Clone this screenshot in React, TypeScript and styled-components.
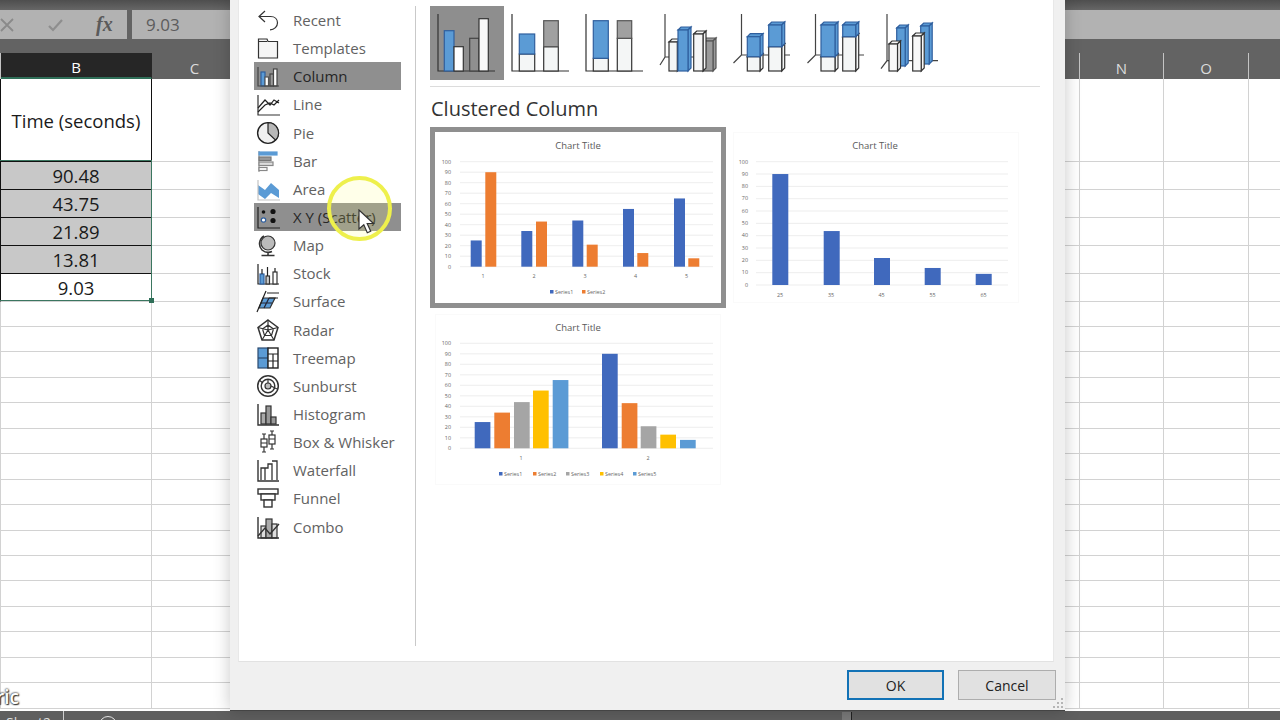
import React from 'react';
import styled, { createGlobalStyle } from 'styled-components';

const Global = createGlobalStyle`
  html, body { margin: 0; padding: 0; background: #fff; }
  #root { width: 1280px; height: 720px; overflow: hidden; }
  * { box-sizing: border-box; }
`;

const Page = styled.div`
  position: relative;
  width: 1280px;
  height: 720px;
  overflow: hidden;
  display: flex;
  flex-direction: column;
  font-family: "Open Sans", "Liberation Sans", sans-serif;
`;
const Main = styled.div`
  display: flex;
  height: 711px;
  flex: none;
`;
const Pane = styled.div<{ $w: number }>`
  width: ${p => p.$w}px;
  flex: none;
  display: flex;
  flex-direction: column;
  overflow: hidden;
`;
const TopBand = styled.div`
  height: 10px;
  flex: none;
  background: linear-gradient(#4e4e4e, #666);
`;
const FormulaBar = styled.div`
  height: 30px;
  flex: none;
  display: flex;
  gap: 5px;
  background: #636363;
  border-bottom: 1px solid #636363;
`;
const FormulaSlot = styled.div<{ $w?: number }>`
  ${p => (p.$w ? `width: ${p.$w}px; flex: none;` : 'flex: 1;')}
  background: #b2b2b2;
  color: #5c5c5c;
  display: flex;
  align-items: center;
  position: relative;
  font-size: 17px;
  padding-left: 14px;
`;
const FormulaIcons = styled.div`
  display: flex;
  align-items: center;
  gap: 31px;
  margin-left: -14px;
`;
const FxMark = styled.span`
  font-family: "Liberation Serif", serif;
  font-style: italic;
  font-weight: 700;
  font-size: 20px;
  color: #5a5a5a;
`;
const HeadGap = styled.div`
  height: 13px;
  flex: none;
  background: #636363;
`;
const HeadRow = styled.div`
  height: 26px;
  flex: none;
  display: flex;
  background: #636363;
`;
const HeadCell = styled.div<{ $w: number; $active?: boolean }>`
  width: ${p => p.$w}px;
  flex: none;
  display: flex;
  align-items: center;
  justify-content: center;
  padding-top: 3px;
  font-size: 15px;
  color: ${p => (p.$active ? '#fff' : '#dcdcdc')};
  background: ${p => (p.$active ? '#262626' : 'transparent')};
  border-right: 1px solid ${p => (p.$active ? '#262626' : '#c4c4c4')};
  border-bottom: ${p => (p.$active ? '2px solid #2f6f58' : '0')};
  &:last-child { border-right: 0; }
`;
const GridArea = styled.div`
  position: relative;
  flex: 1;
  background: #fff;
  overflow: hidden;
`;
const GridRow = styled.div<{ $h: number }>`
  display: flex;
  height: ${p => p.$h}px;
`;
type Tone = 'blank' | 'title' | 'picked' | 'value';
const Cell = styled.div<{ $w: number; $tone?: Tone }>`
  width: ${p => p.$w}px;
  flex: none;
  display: flex;
  align-items: center;
  justify-content: center;
  padding-top: 1px;
  font-size: 18.5px;
  color: #1a1a1a;
  background: ${p => (p.$tone === 'picked' ? '#c8c8c8' : '#fff')};
  border-right: ${p => (p.$tone && p.$tone !== 'blank' ? '1.5px solid #111' : '1px solid #d2d2d2')};
  border-bottom: ${p =>
    p.$tone === 'title' || p.$tone === 'picked' ? '1.5px solid #111' : '1px solid #d2d2d2'};
  &:last-child { border-right: 0; }
`;
const Selection = styled.div`
  position: absolute;
  left: -2px;
  top: 81px;
  width: 154px;
  height: 141px;
  border: 1.5px solid #3b7660;
  &::after {
    content: '';
    position: absolute;
    right: -3px;
    bottom: -3px;
    width: 5px;
    height: 5px;
    background: #2f6f58;
  }
`;
const Caption = styled.div`
  position: absolute;
  left: -4px;
  top: 684px;
  font-size: 19px;
  font-weight: 600;
  color: #fff;
  text-shadow: 0 0 2px #333, 0 0 2px #333, 1px 1px 1px #444;
`;

/* Dialog */
const Dialog = styled.div`
  position: relative;
  z-index: 2;
  width: 835px;
  flex: none;
  display: flex;
  flex-direction: column;
  background: #f0f0f0;
  box-shadow: 0 0 16px rgba(0, 0, 0, 0.22);
  border-bottom: 1px solid #444;
`;
const Body = styled.div`
  height: 662px;
  flex: none;
  margin: 0 11px 0 8px;
  background: #fff;
  display: flex;
  border-bottom: 1px solid #e2e2e2;
  border-right: 1px solid #e8e8e8;
  border-left: 1px solid #e8e8e8;
`;
const Nav = styled.div`
  width: 177px;
  flex: none;
  margin-top: 6px;
  height: 640px;
  padding-left: 15px;
  padding-right: 14px;
  border-right: 1px solid #c9c9c9;
`;
const NavRow = styled.div<{ $on?: boolean }>`
  height: 28.15px;
  display: flex;
  align-items: center;
  gap: 13px;
  padding-left: 2px;
  font-size: 15px;
  white-space: nowrap;
  color: ${p => (p.$on ? '#262626' : '#626262')};
  background: ${p => (p.$on ? '#8f8f8f' : 'transparent')};
`;
const NavSvg = styled.svg`
  width: 24px;
  height: 24px;
  flex: none;
  fill: none;
  stroke: #333;
  stroke-width: 1.2;
`;
const Side = styled.div`
  flex: 1;
  padding: 6px 0 0 14px;
  min-width: 0;
`;
const Strip = styled.div`
  width: 610px;
  height: 81px;
  display: flex;
  border-bottom: 1px solid #dcdcdc;
`;
const Tile = styled.div<{ $on?: boolean }>`
  width: 74px;
  height: 74px;
  flex: none;
  background: ${p => (p.$on ? '#8e8e8e' : 'transparent')};
`;
const TileSvg = styled.svg`
  width: 74px;
  height: 74px;
  display: block;
  fill: none;
  stroke: #333;
  stroke-width: 1.2;
`;
const Heading = styled.div`
  height: 40px;
  display: flex;
  align-items: center;
  padding: 2px 0 0 1px;
  font-size: 20px;
  color: #333;
`;
const Gallery = styled.div`
  display: grid;
  grid-template-columns: 296px 296px;
  column-gap: 2px;
  row-gap: 1px;
  align-content: start;
`;
const Card = styled.div<{ $on?: boolean }>`
  width: 296px;
  height: 181px;
  border: 5px solid ${p => (p.$on ? '#8f8f8f' : 'transparent')};
`;
const ChartSvg = styled.svg<{ $on?: boolean }>`
  display: block;
  width: 286px;
  height: 171px;
  outline: ${p => (p.$on ? '0' : '1px solid #fafafa')};
  outline-offset: -1px;
  font-family: "Open Sans", "Liberation Sans", sans-serif;
`;
const Footer = styled.div`
  flex: 1;
  display: flex;
  justify-content: flex-end;
  align-items: flex-start;
  gap: 14px;
  padding: 8px 9px 0 0;
`;
const Btn = styled.button<{ $primary?: boolean }>`
  width: ${p => (p.$primary ? 97 : 98)}px;
  height: 30px;
  padding: 0;
  font-family: inherit;
  font-size: 14px;
  color: #222;
  background: #e1e1e1;
  border: ${p => (p.$primary ? '2px solid #1272b6' : '1px solid #adadad')};
`;
const Grip = styled.svg`
  position: absolute;
  right: 1px;
  bottom: 1px;
  width: 12px;
  height: 12px;
  fill: #b5b5b5;
`;

/* Status bar */
const Status = styled.div`
  flex: 1;
  background: #5f5f5f;
  display: flex;
  align-items: flex-start;
  color: #dedede;
  font-size: 14px;
  line-height: 14px;
  position: relative;
  overflow: hidden;
`;
const SheetTab = styled.div`
  width: 64px;
  height: 100%;
  padding: 5px 0 0 6px;
  border-right: 1px solid #cfcfcf;
`;
const AddRing = styled.div`
  width: 18px;
  height: 18px;
  margin: 5px 0 0 35px;
  border: 1.5px solid #e4e4e4;
  border-radius: 50%;
`;
const Scroller = styled.div`
  margin: 1px 428px 0 auto;
  width: 10px;
  height: 8px;
  background: #7a7a7a;
  border-right: 1px solid #222;
`;

/* Pointer overlay */
const Halo = styled.div`
  position: absolute;
  z-index: 5;
  left: 327px;
  top: 176px;
  width: 65px;
  height: 65px;
  border-radius: 50%;
  border: 4px solid #eef04c;
  background: rgba(255, 255, 120, 0.16);
`;
const Pointer = styled.svg`
  position: absolute;
  z-index: 6;
  left: 358px;
  top: 209px;
  width: 18px;
  height: 26px;
`;

const rows = [82.5, 28, 28, 28, 28, 28, ...Array(16).fill(25.46)];

const Rec = ({ x, y, w, h, f, s }: { x: number; y: number; w: number; h: number; f: string; s?: string }) => (
  <rect x={x} y={y} width={w} height={h} fill={f} stroke={s ?? '#333'} />
);
const Blue = '#5b9bd5';
const BlueEdge = '#2f5f9e';

const icons: Record<string, React.ReactNode> = {
  Recent: <path d="M9 3 3 8.5l6 5.5M3 8.5h11.5c4.5 0 7 2.8 7 6.3S18.5 21.8 14 21.8" />,
  Templates: <path fill="#f6f6f6" d="M2.5 3H11l1 2.5h9.5V22h-19ZM2.5 5.5H11" />,
  Column: (
    <>
      <Rec x={5} y={8} w={4} h={14} f={Blue} s={BlueEdge} />
      <Rec x={9} y={13} w={3.5} h={9} f="#fff" s="#555" />
      <Rec x={14} y={10} w={3.5} h={12} f="#999" s="#444" />
      <Rec x={17.5} y={5} w={3.5} h={17} f="#fff" s="#444" />
      <path d="M2 3v19h21" stroke="#444" />
    </>
  ),
  Line: (
    <>
      <path d="M2 3v20h22" />
      <path d="M2 16l7-8 5 5 4-5 5 3M2 20l7-7 5-2 4 2 5-5" stroke="#222" />
    </>
  ),
  Pie: (
    <>
      <circle cx="12" cy="12" r="10.4" fill="#f0f0f0" stroke="#222" strokeWidth="1.4" />
      <path d="M12 12V1.6a10.4 10.4 0 0 1 7.6 17.6Z" fill="#b8b8b8" stroke="#222" />
    </>
  ),
  Bar: (
    <>
      <path d="M3 2v21" stroke="#999" />
      <Rec x={3} y={3} w={18} h={3} f={Blue} s={Blue} />
      <Rec x={3} y={8} w={12} h={3.5} f="#999" s="#777" />
      <Rec x={3} y={13} w={14} h={3.5} f="#ddd" s="#888" />
      <Rec x={3} y={18.5} w={8} h={3} f="#fff" s="#888" />
    </>
  ),
  Area: (
    <>
      <path d="M2 8l7 5 6-7 8 7v8l-8-5-6 6-7-5Z" fill={Blue} stroke="none" />
      <path d="M2 3v20h22" stroke="#c4c4c4" />
    </>
  ),
  'X Y (Scatter)': (
    <>
      <path d="M2 2v21h22" stroke="#222" />
      <circle cx="7.5" cy="7" r="1.8" fill="#111" stroke="none" />
      <circle cx="17" cy="6.5" r="2.6" fill="#111" stroke="none" />
      <circle cx="7.5" cy="15" r="2.2" fill="#fff" stroke={BlueEdge} />
      <circle cx="17" cy="15.5" r="2.6" fill="#111" stroke="none" />
    </>
  ),
  Map: (
    <>
      <circle cx="12" cy="10" r="7" fill="#bbb" />
      <path d="M8 3c-5 3-6 10-2 14 3 2.4 7 2.8 10 1.5M12 20v2M5.5 22.500h13" strokeWidth="1.6" />
    </>
  ),
  Stock: (
    <>
      <path d="M2 3v20h21" stroke="#222" />
      <Rec x={4} y={13} w={4} h={10} f={Blue} s={BlueEdge} />
      <Rec x={10} y={15} w={3.5} h={8} f="#ccc" s="#333" />
      <Rec x={17} y={11} w={4} h={12} f="#fff" s="#333" />
      <path d="M11.5 6v9M6 8v5M19 7v4" stroke="#222" />
    </>
  ),
  Surface: (
    <>
      <path d="M7 9h12l-5 10H3Z" fill={Blue} stroke="#333" />
      <path d="M13 9 8 19M5 14h11" stroke="#223" />
      <path d="M10 2 1 23M11 4h12M13 9h9" stroke="#222" />
    </>
  ),
  Radar: (
    <>
      <path d="M12 2l10 7.5-4 12.5H6L2 9.5Z" strokeWidth="1.5" />
      <path d="M12 7l5.5 4-2 6.5h-7l-2-6.5ZM12 2v10l10-2.5M12 12l6 10M12 12l-6 10M12 12 2 9.5" />
    </>
  ),
  Treemap: (
    <>
      <rect x="2" y="2" width="10" height="20" fill={Blue} stroke="#2a4a70" />
      <path d="M2 12h10" stroke="#2a4a70" />
      <rect x="12" y="2" width="10" height="20" fill="#fff" stroke="#222" strokeWidth="1.4" />
      <path d="M12 8h10M12 15h10M17 8v14" stroke="#222" />
    </>
  ),
  Sunburst: (
    <>
      <circle cx="12" cy="12" r="10.3" strokeWidth="1.5" />
      <circle cx="12" cy="12" r="6.8" strokeWidth="1.4" />
      <circle cx="12" cy="12" r="3" fill="#bbb" />
      <path d="M12 5v4M3 6l4 3M15 12l6 3" />
    </>
  ),
  Histogram: (
    <>
      <Rec x={5} y={11} w={5} h={11} f="#aaa" />
      <Rec x={10} y={4} w={5} h={18} f="#999" />
      <Rec x={15} y={15} w={5} h={7} f="#999" />
      <path d="M2 2v21h21" strokeWidth="1.4" />
    </>
  ),
  'Box & Whisker': (
    <>
      <path d="M8 4v5M8 17v5M16 1v4M16 14v5M6 4h4M6 22h4M14 1h4M14 19h4" />
      <rect x="5" y="9" width="6" height="8" fill="#fff" />
      <rect x="13" y="5" width="6" height="9" fill="#fff" />
      <path d="M5 13h6M13 9h6" />
    </>
  ),
  Waterfall: (
    <>
      <path d="M2 2v21h21" strokeWidth="1.4" />
      <path d="M5 22V10h4V22M9 10h3V6h4v16M16 3h5v19" strokeWidth="1.3" />
    </>
  ),
  Funnel: (
    <>
      <rect x="2" y="3" width="20" height="5" fill="#fff" strokeWidth="1.4" />
      <rect x="5" y="8" width="14" height="6" fill="#fff" strokeWidth="1.4" />
      <rect x="8" y="14" width="8" height="7" fill="#fff" strokeWidth="1.4" />
    </>
  ),
  Combo: (
    <>
      <Rec x={5} y={11} w={5} h={12} f="#ddd" />
      <Rec x={10} y={4} w={6} h={19} f="#aaa" />
      <Rec x={16} y={9} w={5} h={14} f="#ddd" />
      <path d="M2 2v21h21" strokeWidth="1.4" />
      <path d="M2 21l7-8 5 6 9-10" strokeWidth="1.4" />
    </>
  ),
};

const navNames = Object.keys(icons);

const Bar3D = ({ x, y, w, h, d = 3, f, s = '#333' }: { x: number; y: number; w: number; h: number; d?: number; f: string; s?: string }) => (
  <g stroke={s}>
    <path d={`M${x} ${y}l${d} ${-d}h${w}l${-d} ${d}Z`} fill={f} />
    <path d={`M${x + w} ${y}l${d} ${-d}v${h}l${-d} ${d}Z`} fill={f} />
    <rect x={x} y={y} width={w} height={h} fill={f} />
  </g>
);
const Axes2D = () => <path d="M8 8v57h57" stroke="#333" />;
const Axes3D = ({ x, y, dx = 8 }: { x: number; y: number; dx?: number }) => (
  <path d={`M${x} 8v${y - 8}l${-dx} 8M${x} ${y}H64`} stroke="#444" />
);

const tiles: React.ReactNode[] = [
  <>
    <Axes2D />
    <Rec x={14.3} y={24.7} w={9.7} h={40.3} f={Blue} s={BlueEdge} />
    <Rec x={24} y={40.7} w={9.3} h={24.3} f="#fff" />
    <Rec x={39.7} y={32.3} w={9.3} h={32.7} f="#8f8f8f" s="#444" />
    <Rec x={49} y={12.7} w={9.3} h={52.3} f="#f8f8f8" />
  </>,
  <>
    <Axes2D />
    <Rec x={15.3} y={48} w={15.4} h={17} f="#f4f6f6" />
    <Rec x={15.3} y={28} w={15.4} h={20} f={Blue} s={BlueEdge} />
    <Rec x={39.7} y={40.7} w={14.6} h={24.3} f="#f4f6f6" />
    <Rec x={39.7} y={14.7} w={14.6} h={26} f="#a0a0a0" s="#555" />
  </>,
  <>
    <Axes2D />
    <Rec x={15.3} y={52.3} w={15} h={12.7} f="#f4f6f6" />
    <Rec x={15.3} y={14.7} w={15} h={37.6} f={Blue} s={BlueEdge} />
    <Rec x={39.3} y={32.3} w={14.4} h={32.7} f="#f4f6f6" />
    <Rec x={39.3} y={14.7} w={14.4} h={17.6} f="#a0a0a0" s="#555" />
  </>,
  <>
    <Axes3D x={13} y={51} dx={5} />
    <Bar3D x={17} y={36} w={8.3} h={29} f="#f4f6f6" />
    <Bar3D x={26} y={24} w={10} h={41} f={Blue} s={BlueEdge} />
    <Bar3D x={51} y={35} w={10} h={30} f="#9a9a9a" s="#555" />
    <Bar3D x={41.7} y={28} w={9.3} h={37} f="#f6f6f6" />
  </>,
  <>
    <Axes3D x={15.5} y={49} />
    <Bar3D x={21.3} y={50.7} w={12.7} h={14.3} f="#f4f6f6" />
    <Bar3D x={21.3} y={30.7} w={12.7} h={20} f={Blue} s={BlueEdge} />
    <Bar3D x={42.7} y={40.7} w={13} h={24.3} f="#f4f6f6" />
    <Bar3D x={42.7} y={19} w={13} h={21.7} f={Blue} s={BlueEdge} />
  </>,
  <>
    <Axes3D x={15.5} y={49} />
    <Bar3D x={21} y={50.7} w={14} h={14.3} f="#f4f6f6" />
    <Bar3D x={21} y={19} w={14} h={31.7} f={Blue} s={BlueEdge} />
    <Bar3D x={42.7} y={30.7} w={13} h={34.3} f="#f4f6f6" />
    <Bar3D x={42.7} y={19} w={13} h={11.7} f={Blue} s={BlueEdge} />
  </>,
  <>
    <Axes3D x={13} y={54.7} dx={6} />
    <Bar3D x={22.7} y={22} w={8.5} h={38} f={Blue} s={BlueEdge} />
    <Bar3D x={46.7} y={20} w={8.5} h={38} f={Blue} s={BlueEdge} />
    <Bar3D x={15} y={38} w={8.5} h={27} f="#f8f8f8" />
    <Bar3D x={38.7} y={30} w={8.5} h={35} f="#f8f8f8" />
  </>,
];

const C = { b: '#4069bd', o: '#ed7d31', g: '#a5a5a5', y: '#ffc000', l: '#5b9bd5' };

type Spec = {
  ox: number; oy: number; top: number; zero: number; gx: [number, number]; lx: number; tx: number; ty: number;
  bars: [number, number, string][]; bw: number;
  xl: [number, string][]; xy: number; legend?: { y: number; items: [number, string, string][] };
  on?: boolean;
};

const specs: Spec[] = [
  {
    on: true, ox: 435, oy: 132, top: 161.7, zero: 266.7, gx: [460, 713], lx: 451, tx: 578, ty: 149,
    bw: 11,
    bars: [
      [470.7, 25, C.b], [485.3, 90, C.o], [521.3, 34, C.b], [536, 43, C.o], [572.3, 44, C.b],
      [586.7, 21, C.o], [623, 55, C.b], [637.3, 13, C.o], [674, 65, C.b], [688.3, 8, C.o],
    ],
    xl: [[483, '1'], [534, '2'], [585, '3'], [635.5, '4'], [686.5, '5']], xy: 278,
    legend: { y: 292, items: [[550, 'Series1', C.b], [582, 'Series2', C.o]] },
  },
  {
    ox: 733, oy: 132, top: 161.7, zero: 285, gx: [756, 1008], lx: 748, tx: 875, ty: 149,
    bw: 16,
    bars: [[772.3, 90, C.b], [823.7, 43.75, C.b], [874, 21.89, C.b], [924.7, 13.81, C.b], [975.7, 9.03, C.b]],
    xl: [[780, '25'], [831, '35'], [881.5, '45'], [932.5, '55'], [983.5, '65']], xy: 296.5,
  },
  {
    ox: 435, oy: 314, top: 343.3, zero: 448.3, gx: [460, 713], lx: 451, tx: 578, ty: 330.5,
    bw: 15.7,
    bars: [
      [474.7, 25, C.b], [494.3, 34, C.o], [514, 44, C.g], [533, 55, C.y], [552.7, 65, C.l],
      [602, 90, C.b], [621.7, 43, C.o], [640.7, 21, C.g], [660.3, 13, C.y], [680, 8, C.l],
    ],
    xl: [[521, '1'], [648, '2']], xy: 459.5,
    legend: {
      y: 474,
      items: [[499, 'Series1', C.b], [533, 'Series2', C.o], [566, 'Series3', C.g], [600, 'Series4', C.y], [633, 'Series5', C.l]],
    },
  },
];

const Chart = ({ s }: { s: Spec }) => {
  const unit = (s.zero - s.top) / 100;
  return (
    <ChartSvg $on={s.on} viewBox={`${s.ox} ${s.oy} 286 171`}>
      <text x={s.tx} y={s.ty} textAnchor="middle" fontSize="9.5" fill="#595959">Chart Title</text>
      {Array.from({ length: 11 }, (_, i) => {
        const y = s.zero - i * 10 * unit;
        return (
          <g key={i}>
            <line x1={s.gx[0]} x2={s.gx[1]} y1={y} y2={y} stroke="#e8e8e8" strokeWidth="0.8" />
            <text x={s.lx} y={y + 1.8} textAnchor="end" fontSize="5.4" fill="#666">{i * 10}</text>
          </g>
        );
      })}
      {s.bars.map(([x, v, c], i) => (
        <rect key={i} x={x} y={s.zero - v * unit} width={s.bw} height={v * unit} fill={c} />
      ))}
      {s.xl.map(([x, t]) => (
        <text key={t} x={x} y={s.xy} textAnchor="middle" fontSize="5.4" fill="#666">{t}</text>
      ))}
      {s.legend?.items.map(([x, t, c]) => (
        <g key={t}>
          <rect x={x} y={s.legend!.y - 2} width={3.5} height={3.5} fill={c} />
          <text x={x + 5} y={s.legend!.y + 1.5} fontSize="5.4" fill="#666">{t}</text>
        </g>
      ))}
    </ChartSvg>
  );
};

const LeftPane = () => (
  <Pane $w={230}>
    <TopBand />
    <FormulaBar>
      <FormulaSlot $w={127}>
        <FormulaIcons>
          <svg width="16" height="16" viewBox="0 0 16 16" fill="none" stroke="#8a8a8a" strokeWidth="1.8">
            <path d="M1 2l12 12M13 2 1 14" />
          </svg>
          <svg width="18" height="16" viewBox="0 0 18 16" fill="none" stroke="#8e8e8e" strokeWidth="2.2">
            <path d="M2 9l4 4 9-10" />
          </svg>
          <FxMark>fx</FxMark>
        </FormulaIcons>
      </FormulaSlot>
      <FormulaSlot>9.03</FormulaSlot>
    </FormulaBar>
    <HeadGap />
    <HeadRow>
      <HeadCell $w={1} />
      <HeadCell $w={151} $active>B</HeadCell>
      <HeadCell $w={85}>C</HeadCell>
    </HeadRow>
    <GridArea>
      {rows.map((h, i) => {
        const values = ['90.48', '43.75', '21.89', '13.81'];
        const tone: Tone = i === 0 ? 'title' : i <= 4 ? 'picked' : i === 5 ? 'value' : 'blank';
        const text = i === 0 ? 'Time (seconds)' : i <= 4 ? values[i - 1] : i === 5 ? '9.03' : '';
        return (
          <GridRow key={i} $h={h}>
            <Cell $w={1} $tone={tone} />
            <Cell $w={151} $tone={tone}>{text}</Cell>
            <Cell $w={85} />
          </GridRow>
        );
      })}
      <Selection />
    </GridArea>
  </Pane>
);

const RightPane = () => (
  <Pane $w={215}>
    <TopBand />
    <FormulaBar>
      <FormulaSlot />
    </FormulaBar>
    <HeadGap />
    <HeadRow>
      <HeadCell $w={15} />
      <HeadCell $w={84}>N</HeadCell>
      <HeadCell $w={85}>O</HeadCell>
      <HeadCell $w={31} />
    </HeadRow>
    <GridArea>
      {rows.map((h, i) => (
        <GridRow key={i} $h={h}>
          <Cell $w={15} />
          <Cell $w={84} />
          <Cell $w={85} />
          <Cell $w={31} />
        </GridRow>
      ))}
    </GridArea>
  </Pane>
);

export default function App() {
  return (
    <Page>
      <Global />
      <Main>
        <LeftPane />
        <Dialog>
          <Body>
            <Nav>
              {navNames.map(n => (
                <NavRow key={n} $on={n === 'Column' || n === 'X Y (Scatter)'}>
                  <NavSvg viewBox="0 0 24 24">{icons[n]}</NavSvg>
                  {n}
                </NavRow>
              ))}
            </Nav>
            <Side>
              <Strip>
                {tiles.map((t, i) => (
                  <Tile key={i} $on={i === 0}>
                    <TileSvg viewBox="0 0 74 74">{t}</TileSvg>
                  </Tile>
                ))}
              </Strip>
              <Heading>Clustered Column</Heading>
              <Gallery>
                {specs.map((s, i) => (
                  <Card key={i} $on={s.on}>
                    <Chart s={s} />
                  </Card>
                ))}
              </Gallery>
            </Side>
          </Body>
          <Footer>
            <Btn $primary>OK</Btn>
            <Btn>Cancel</Btn>
          </Footer>
          <Grip viewBox="0 0 12 12">
            <rect x="9" y="1" width="2" height="2" />
            <rect x="5" y="5" width="2" height="2" />
            <rect x="9" y="5" width="2" height="2" />
            <rect x="1" y="9" width="2" height="2" />
            <rect x="5" y="9" width="2" height="2" />
            <rect x="9" y="9" width="2" height="2" />
          </Grip>
        </Dialog>
        <RightPane />
      </Main>
      <Status>
        <SheetTab>Sheet2</SheetTab>
        <AddRing />
        <Scroller />
      </Status>
      <Caption>ric</Caption>
      <Halo />
      <Pointer viewBox="0 0 18 26">
        <path d="M1 1v19l4.800-4.300 3.500 8 3.400-1.500-3.500-7.700H15.500Z" fill="#fff" stroke="#333" strokeWidth="1.2" />
      </Pointer>
    </Page>
  );
}
